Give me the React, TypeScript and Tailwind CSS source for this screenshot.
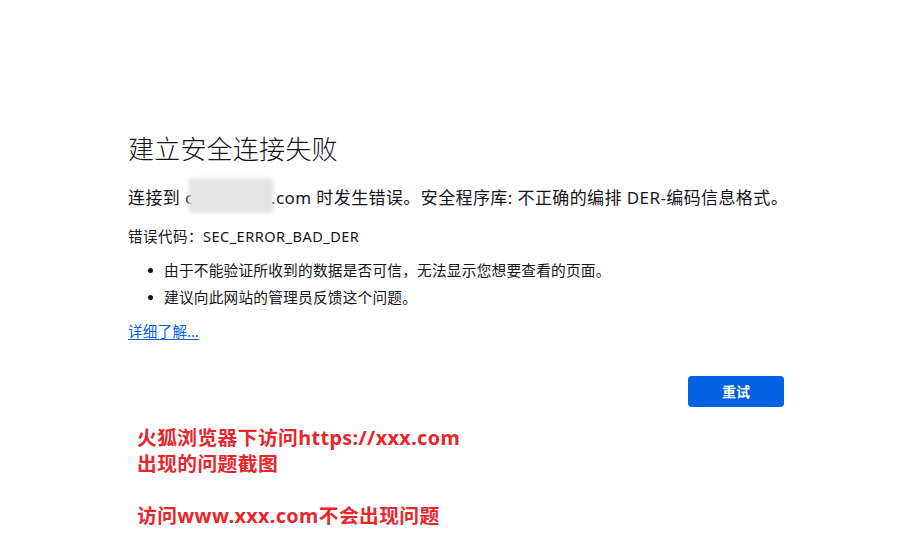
import React from 'react';

const font = { fontFamily: '"Noto Sans", "Noto Sans CJK SC", sans-serif' };

const App: React.FC = () => {
  return (
    <div className="w-[906px] h-[550px] bg-white text-[#15141a] overflow-hidden" style={font}>
      <div className="ml-[128px] w-[656px] pt-[133px] flex flex-col">
        <h1 className="text-[26px] leading-[32px] font-light tracking-[0.2px]">建立安全连接失败</h1>

        <p className="mt-[21px] text-[17px] leading-[24px] tracking-[0.4px] whitespace-nowrap">
          连接到{' '}
          <span className="relative inline-block w-[86px] align-top">
            c
            <span className="absolute left-[4px] top-[-8px] w-[84px] h-[35px] bg-[#e4e4e4] blur-[2px]" />
          </span>
          .com 时发生错误。安全程序库: 不正确的编排 DER-编码信息格式。
        </p>

        <p className="mt-[16px] text-[14.5px] leading-[20px] tracking-[0.5px]">错误代码：SEC_ERROR_BAD_DER</p>

        <ul className="mt-[14px] flex flex-col gap-[7px] text-[14.7px] leading-[20px] tracking-[0.2px]">
          <li className="flex items-center">
            <span className="w-[5px] h-[5px] rounded-full bg-[#15141a] ml-[20px] mr-[11px]" />
            由于不能验证所收到的数据是否可信，无法显示您想要查看的页面。
          </li>
          <li className="flex items-center">
            <span className="w-[5px] h-[5px] rounded-full bg-[#15141a] ml-[20px] mr-[11px]" />
            建议向此网站的管理员反馈这个问题。
          </li>
        </ul>

        <a href="#" className="mt-[14px] self-start text-[14.5px] leading-[20px] tracking-[0.3px] text-[#0061e0] underline underline-offset-2">
          详细了解…
        </a>

        <div className="mt-[35px] flex justify-end">
          <button className="w-[96px] h-[31px] rounded-[4px] bg-[#0061e0] text-white text-[14px] font-bold">
            重试
          </button>
        </div>

        <div className="mt-[18px] pl-[9px] text-[19.75px] leading-[26px] tracking-[0.4px] font-bold text-[#e8262c]">
          <p>火狐浏览器下访问https://xxx.com</p>
          <p>出现的问题截图</p>
          <p>&nbsp;</p>
          <p>访问www.xxx.com不会出现问题</p>
        </div>
      </div>
    </div>
  );
};

export default App;
